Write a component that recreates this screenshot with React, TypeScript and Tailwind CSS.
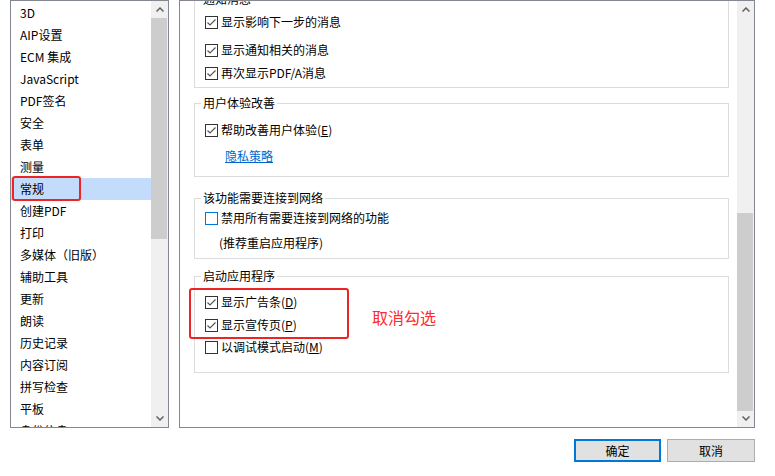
import React from 'react';

const FONT = { fontFamily: '"Noto Sans CJK SC", "Microsoft YaHei", sans-serif' };

const categories = [
  '3D', 'AIP设置', 'ECM 集成', 'JavaScript', 'PDF签名', '安全', '表单', '测量', '常规',
  '创建PDF', '打印', '多媒体（旧版）', '辅助工具', '更新', '朗读', '历史记录', '内容订阅',
  '拼写检查', '平板', '身份信息',
];

function Chevron({ up }: { up?: boolean }) {
  return (
    <svg width="8" height="5" viewBox="0 0 8 5">
      <path d={up ? 'M0.5 4.5 L4 1 L7.5 4.5' : 'M0.5 0.5 L4 4 L7.5 0.5'} fill="none" stroke="#606060" strokeWidth="1.5" />
    </svg>
  );
}

function ScrollBar({ thumbTop, thumbHeight }: { thumbTop: number; thumbHeight: number }) {
  return (
    <div className="w-[17px] h-full bg-[#f0f0f0] flex flex-col">
      <div className="h-[17px] flex items-center justify-center shrink-0"><Chevron up /></div>
      <div className="flex-1 relative">
        <div className="absolute left-0 right-[1px] bg-[#cdcdcd]" style={{ top: thumbTop, height: thumbHeight }} />
      </div>
      <div className="h-[17px] flex items-center justify-center shrink-0"><Chevron /></div>
    </div>
  );
}

function CheckBox({ checked, blue }: { checked?: boolean; blue?: boolean }) {
  return (
    <svg width="13" height="13" viewBox="0 0 13 13" className="shrink-0">
      <rect x="0.5" y="0.5" width="12" height="12" fill="#fff" stroke={blue ? '#0078d7' : '#333'} />
      {checked && <path d="M2.5 6.5 L5 9 L10.5 3.5" fill="none" stroke="#555" strokeWidth="1.2" />}
    </svg>
  );
}

function Row({ checked, blue, mt, children }: { checked?: boolean; blue?: boolean; mt: string; children: React.ReactNode }) {
  return (
    <div className={`h-[22px] flex items-center pl-[10px] gap-[3px] text-[12px] text-black ${mt}`}>
      <CheckBox checked={checked} blue={blue} />
      <span>{children}</span>
    </div>
  );
}

function Group({ title, className, children }: { title: string; className: string; children: React.ReactNode }) {
  return (
    <div className={`relative w-[535px] ml-[14px] border border-[#dcdcdc] flex flex-col ${className}`}>
      <span className="absolute -top-[9px] left-[6px] bg-white px-[2px] text-[12px] leading-[16px] text-black">{title}</span>
      {children}
    </div>
  );
}

export default function App() {
  return (
    <div className="w-[775px] h-[476px] bg-white overflow-hidden" style={FONT}>
      <div className="flex pl-[10px] gap-[10px]">
        {/* Category list */}
        <div className="w-[159px] h-[428px] border border-[#828790] flex">
          <div className="relative w-[140px] overflow-hidden pt-[1px]">
            {categories.map((c) => (
              <div
                key={c}
                className={`h-[22px] flex items-center pl-[9px] text-[12px] text-black ${c === '常规' ? 'bg-[#c4dcfb]' : ''}`}
              >
                {c}
              </div>
            ))}
            <div className="absolute left-[1px] top-[175px] w-[69px] h-[25px] border-2 border-[#ee2424] rounded-[3px]" />
          </div>
          <ScrollBar thumbTop={0} thumbHeight={221} />
        </div>

        {/* Settings panel */}
        <div className="w-[576px] h-[428px] border border-[#828790] flex">
          <div className="w-[557px] overflow-hidden flex flex-col">
            <Group title="通知消息" className="h-[89px] -mt-[2px] shrink-0">
              <Row checked mt="mt-[11px]">显示影响下一步的消息</Row>
              <Row checked mt="mt-[6px]">显示通知相关的消息</Row>
              <Row checked mt="mt-[1px]">再次显示PDF/A消息</Row>
            </Group>

            <Group title="用户体验改善" className="h-[74px] mt-[15px] shrink-0">
              <Row checked mt="mt-[15px]">帮助改善用户体验(<u>E</u>)</Row>
              <div className="h-[22px] mt-[4px] flex items-center pl-[30px] text-[12px]">
                <span className="text-[#0066cc] underline">隐私策略</span>
              </div>
            </Group>

            <Group title="该功能需要连接到网络" className="h-[61px] mt-[21px] shrink-0">
              <Row blue mt="mt-[8px]">禁用所有需要连接到网络的功能</Row>
              <div className="h-[22px] mt-[3px] flex items-center pl-[24px] text-[12px] text-black">(推荐重启应用程序)</div>
            </Group>

            <Group title="启动应用程序" className="h-[97px] mt-[17px] shrink-0">
              <Row checked mt="mt-[14px]">显示广告条(<u>D</u>)</Row>
              <Row checked mt="mt-[1px]">显示宣传页(<u>P</u>)</Row>
              <Row mt="mt-[0px]">以调试模式启动(<u>M</u>)</Row>
              <div className="absolute left-[-6px] top-[11px] w-[160px] h-[51px] border-2 border-[#ee2424] rounded-[3px]" />
              <span className="absolute left-[177px] top-[30px] text-[16px] leading-[20px] text-[#ff2a2a]">取消勾选</span>
            </Group>
          </div>
          <div className="w-[2px]" />
          <ScrollBar thumbTop={195} thumbHeight={198} />
        </div>
      </div>

      <div className="flex justify-end gap-[6px] pr-[20px] mt-[11px]">
        <button className="w-[87px] h-[23px] border-2 border-[#0078d7] bg-[#e1e1e1] text-[12px] text-black">确定</button>
        <button className="w-[88px] h-[23px] border border-[#adadad] bg-[#e1e1e1] text-[12px] text-black">取消</button>
      </div>
    </div>
  );
}
